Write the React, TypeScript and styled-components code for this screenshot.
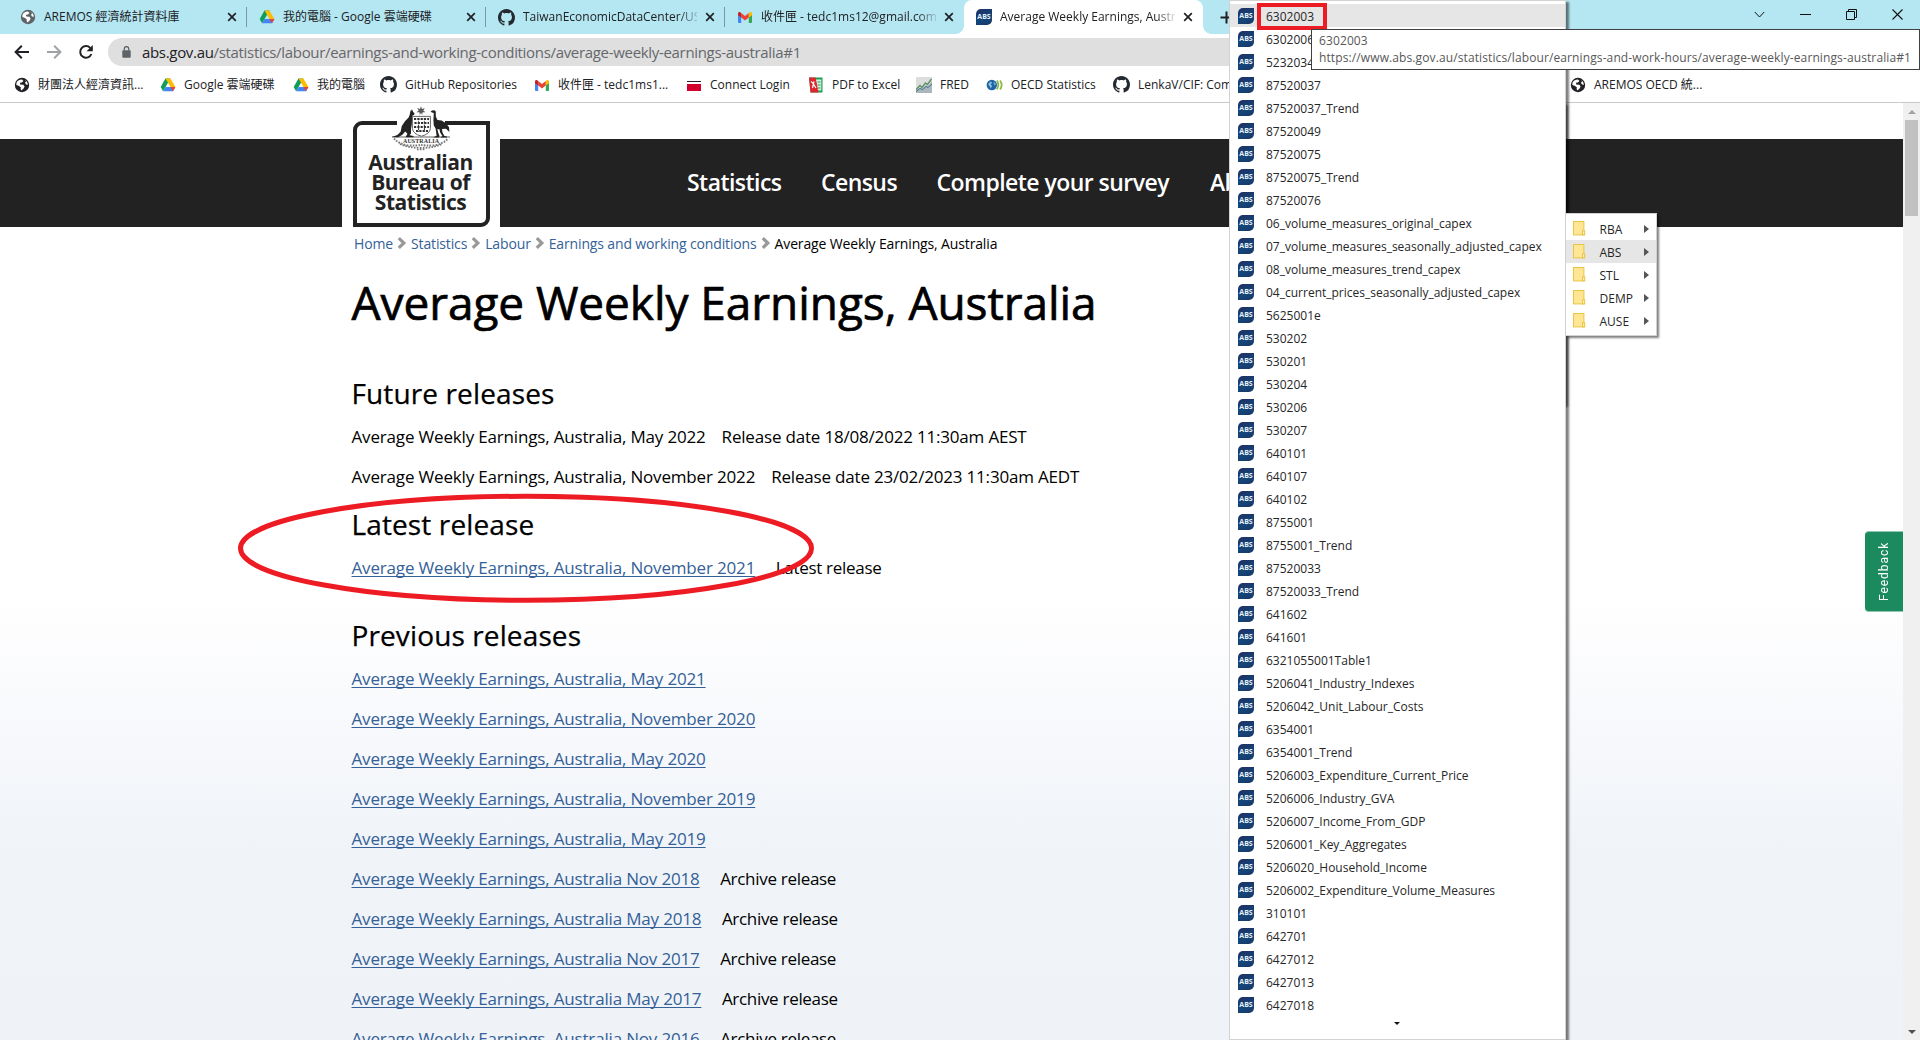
import React from "react";
import styled, { createGlobalStyle, css } from "styled-components";

const uiFont = `"Open Sans", "Noto Sans CJK TC", sans-serif`;
const RED = "#ed1c24";

const GlobalStyle = createGlobalStyle`
  *, *::before, *::after { box-sizing: border-box; }
  body { margin: 0; background: #fff; font-family: ${uiFont}; color: #000; overflow: hidden; }
  svg { display: block; flex: none; }
`;

const Screen = styled.div`
  position: relative;
  width: 1920px;
  height: 1040px;
  overflow: hidden;
  display: flex;
  flex-direction: column;
`;

/* ---------- browser chrome ---------- */

const TabStrip = styled.div`
  height: 34px;
  flex: none;
  display: flex;
  padding-left: 8px;
  background: #b4e7f2;
`;

const TabItem = styled.div<{ $active?: boolean; $divider?: boolean }>`
  position: relative;
  width: 239px;
  height: 34px;
  flex: none;
  display: flex;
  align-items: center;
  gap: 8px;
  padding: 0 10px 0 12px;
  font-size: 12px;
  color: #202124;
  ${(p) =>
    p.$active &&
    css`
      background: #fff;
      border-radius: 8px 8px 0 0;
      &::before,
      &::after {
        content: "";
        position: absolute;
        bottom: 0;
        width: 8px;
        height: 8px;
      }
      &::before {
        left: -8px;
        background: radial-gradient(circle at 0 0, transparent 7.5px, #fff 8px);
      }
      &::after {
        right: -8px;
        background: radial-gradient(circle at 100% 0, transparent 7.5px, #fff 8px);
      }
    `}
  ${(p) =>
    p.$divider &&
    css`
      &::after {
        content: "";
        position: absolute;
        right: 0;
        top: 7px;
        width: 1px;
        height: 20px;
        background: #7d979e;
      }
    `}
`;

const TabTitle = styled.span<{ $fade?: boolean }>`
  flex: 1;
  min-width: 0;
  height: 20px;
  line-height: 20px;
  white-space: nowrap;
  overflow: hidden;
  ${(p) =>
    p.$fade &&
    css`
      mask-image: linear-gradient(90deg, #000 156px, transparent 178px);
    `}
`;

const NewTab = styled.div`
  display: flex;
  align-items: center;
  padding-left: 17px;
`;

const WindowControls = styled.div`
  margin-left: auto;
  height: 28px;
  display: flex;
  align-items: center;
  & > svg {
    margin-right: 35px;
  }
  & > svg:last-child {
    margin-right: 17px;
  }
`;

const Toolbar = styled.div`
  height: 35px;
  flex: none;
  display: flex;
  align-items: center;
  padding: 1px 0 0 14px;
  gap: 16px;
  background: #fff;
`;

const Omnibox = styled.div`
  margin-left: -2px;
  width: 1500px;
  height: 28px;
  display: flex;
  align-items: center;
  gap: 11px;
  padding-left: 14px;
  border-radius: 14px;
  background: #dfdfdf;
  font-size: 15px;
  letter-spacing: -0.32px;
  color: #65686c;
  white-space: nowrap;
`;

const Host = styled.span`
  color: #202124;
`;

const BookmarksBar = styled.div`
  height: 34px;
  flex: none;
  display: flex;
  align-items: center;
  padding: 0 0 2px 14px;
  background: #fff;
  border-bottom: 1px solid #c9c9c9;
`;

const Bookmark = styled.div<{ $w: number }>`
  width: ${(p) => p.$w}px;
  flex: none;
  display: flex;
  align-items: center;
  gap: 8px;
  font-size: 12px;
  line-height: 20px;
  color: #202124;
  white-space: nowrap;
`;

/* ---------- icons ---------- */

const AbsIcon = styled.span`
  width: 16px;
  height: 16px;
  flex: none;
  display: flex;
  align-items: center;
  justify-content: center;
  border-radius: 5px 0 5px 0;
  background: linear-gradient(160deg, #1f2f63, #14477a 60%, #1b3465);
  color: #e8f0f8;
  font: 700 7px/16px "Open Sans", sans-serif;
`;

const GlobeIcon = ({ color = "#202124" }: { color?: string }) => (
  <svg width="16" height="16" viewBox="0 0 16 16">
    <circle cx="8" cy="8" r="7.2" fill={color} />
    <path d="M2.6 5.2C4 3 6.2 2.3 8 2.5L9.5 4 7.8 5.4 6 5.7 6.2 7.4 9.4 7.7 10.6 9.4 9.6 11.4 7.4 13.6 6.6 12 6.8 10.2 4.6 8.8 2.3 8Z" fill="#fff" />
    <path d="M10.6 2.9 12.2 4.3 11 5.8 12 7.4 13.9 7.8C13.7 5.4 12.6 3.7 10.6 2.9Z" fill="#fff" />
  </svg>
);

const DriveIcon = () => (
  <svg width="16" height="16" viewBox="0 0 16 16">
    <path d="M5.5 1.5H10.4L8 5.7 3.1 14.2.7 10Z" fill="#0f9d58" />
    <path d="M5.5 1.5H10.4L15.4 10H10.5Z" fill="#fbbc04" />
    <path d="M5.6 10H15.4L13 14.3H3.1Z" fill="#4285f4" />
    <path d="M15.4 10 13 14.3 10.5 10Z" fill="#ea4335" />
  </svg>
);

const GithubIcon = () => (
  <svg width="17" height="17" viewBox="0 0 16 16">
    <path fill="#24292f" d="M8 0C3.58 0 0 3.58 0 8c0 3.54 2.29 6.53 5.47 7.59.4.07.55-.17.55-.38 0-.19-.01-.82-.01-1.49-2.01.37-2.53-.49-2.69-.94-.09-.23-.48-.94-.82-1.13-.28-.15-.68-.52-.01-.53.63-.01 1.08.58 1.23.82.72 1.21 1.87.87 2.33.66.07-.52.28-.87.51-1.07-1.78-.2-3.64-.89-3.64-3.95 0-.87.31-1.59.82-2.15-.08-.2-.36-1.02.08-2.12 0 0 .67-.21 2.2.82.64-.18 1.32-.27 2-.27s1.36.09 2 .27c1.53-1.04 2.2-.82 2.2-.82.44 1.1.16 1.92.08 2.12.51.56.82 1.27.82 2.15 0 3.07-1.87 3.75-3.65 3.95.29.25.54.73.54 1.48 0 1.07-.01 1.93-.01 2.2 0 .21.15.46.55.38A8.01 8.01 0 0 0 16 8c0-4.42-3.58-8-8-8z" />
  </svg>
);

const GmailIcon = () => (
  <svg width="16" height="16" viewBox="0 0 16 16">
    <path d="M1 4.5V13a.9.9 0 0 0 .9.9H4.2V6.6Z" fill="#4285f4" />
    <path d="M15 4.5V13a.9.9 0 0 1-.9.9H11.8V6.6Z" fill="#34a853" />
    <path d="M4.2 8.6V4.1L8 7 11.8 4.1V8.6L8 11.5Z" fill="#ea4335" />
    <path d="M1 4.4V6.2L4.2 8.6V4.1L3.1 3.2C2.2 2.5 1 3.2 1 4.4Z" fill="#c5221f" />
    <path d="M15 4.4V6.2L11.8 8.6V4.1L12.9 3.2C13.8 2.5 15 3.2 15 4.4Z" fill="#fbbc04" />
  </svg>
);

const ConnectIcon = () => (
  <svg width="16" height="16" viewBox="0 0 16 16">
    <path d="M1 4H15V5H1Z" fill="#222" />
    <path d="M1 7H15V14H1Z" fill="#d4002c" />
  </svg>
);

const PdfIcon = () => (
  <svg width="16" height="16" viewBox="0 0 16 16">
    <path d="M1 .5H14.5V15.5H2.5Z" fill="#1e9b57" />
    <path d="M8 2.5H13.3V13.5H9Z" fill="#d9f1e2" />
    <path d="M9.5 5H12.5M9.5 8H12.5M9.5 11H12.5" stroke="#1e9b57" />
    <path d="M1 .5H7.5L10.5 15.5H2.5Z" fill="#e0262d" />
    <path d="M3 4.5C5.5 6 6 8.5 8 11M6 4.5 4.5 11" stroke="#fff" fill="none" strokeWidth="1.2" />
  </svg>
);

const FredIcon = () => (
  <svg width="16" height="16" viewBox="0 0 16 16">
    <rect width="16" height="16" fill="#dcdedd" />
    <path d="M0 13 4 10.5 6 11.5 10 8 12 9 16 4V16H0Z" fill="#a9b7bd" />
    <path d="M0 12.5 4 8.5 6 10.5 9.5 6 11.5 7.5 15.5 2" stroke="#5f8f63" strokeWidth="1.4" fill="none" />
    <path d="M0 14.5 4 11.5 6.5 12.5 10 9.5 12 10.5 16 7" stroke="#47718f" fill="none" />
  </svg>
);

const OecdIcon = () => (
  <svg width="17" height="16" viewBox="0 0 17 16">
    <circle cx="5.8" cy="8" r="5.2" fill="#1c64a5" />
    <path d="M2.8 6 5 4.6 6 5.8 4.8 7.2 6 9 4.8 11.4 3.8 9.4 2.4 8Z" fill="#8fc0e0" />
    <path d="M7.6 5 9.4 5.6 9.8 8 8 8.6Z" fill="#6fa9d3" />
    <path d="M10.8 3.5Q13.8 8 10.8 12.5M14 3.5Q17.3 8 14 12.5" stroke="#8db94a" strokeWidth="1.8" fill="none" />
  </svg>
);

const CloseIcon = () => (
  <svg width="10" height="10" viewBox="0 0 10 10">
    <path d="M1.2 1.2 8.8 8.8M8.8 1.2 1.2 8.8" stroke="#202124" strokeWidth="1.7" />
  </svg>
);

const LockIcon = () => (
  <svg width="9" height="12" viewBox="0 0 9 12">
    <rect x=".3" y="4.2" width="8.4" height="7.6" rx="1" fill="#5f6368" />
    <path d="M2.3 4.5V2.8a2.2 2.2 0 0 1 4.4 0V4.5" stroke="#5f6368" strokeWidth="1.3" fill="none" />
  </svg>
);

const ArrowIcon = ({ flip, color }: { flip?: boolean; color: string }) => (
  <svg width="16" height="16" viewBox="0 0 16 16">
    <path d={flip ? "M1 8H14M8.2 1.8 14.4 8 8.2 14.2" : "M15 8H2M7.8 1.8 1.6 8 7.8 14.2"} stroke={color} strokeWidth="2" fill="none" />
  </svg>
);

const ReloadIcon = () => (
  <svg width="16" height="16" viewBox="0 0 16 16">
    <path d="M13.4 10A5.8 5.8 0 1 1 12.2 3.9L13.8 5.6" stroke="#202124" strokeWidth="2" fill="none" />
    <path d="M14.8 1V7.2H8.6Z" fill="#202124" />
  </svg>
);

const FolderIcon = () => (
  <svg width="13" height="15" viewBox="0 0 13 15">
    <rect x=".5" y=".5" width="10.4" height="13.4" fill="#ffe694" stroke="#e8c545" />
    <rect x="9.5" y="9.8" width="2.2" height="4.1" fill="#fff0b5" stroke="#e8c545" />
  </svg>
);

const CoatOfArms = () => (
  <svg width="60" height="46" viewBox="0 0 60 46">
    <rect x="6" y="10" width="48" height="14" fill="#fff" />
    <g fill="#232323">
      <path d="M30 .3 31 3 33.8 2 32.3 4.6 34.5 6.3 31.6 6.3 31.2 9 30 6.8 28.8 9 28.4 6.3 25.5 6.3 27.7 4.6 26.2 2 29 3Z" opacity=".75" />
      <path d="M20.2 3.2 21 5.2 21.6 3.4 22 5.8 23.6 7.6 23 9 21.4 9.4 21.4 12.4 24.3 14.6 23.8 15.6 21 14.8 20.8 18.6 20 22.6 20 27.5 18.6 29.2 22.6 30 22.4 31.2 14.6 31.2 16.4 27.8 14.2 25.4 11.4 28.8 7.2 31.2.8 31 6.4 29 9.6 25.8 10.8 20 14 15.2 17.6 11.6 18.8 8.4 19.2 6Z" />
      <path d="M41 4.4 43.4 4.2 44.8 5.4 44.8 10.4 46.4 14 50.6 14.4 55 17.2 58 21.2 58.4 26 55 22.8 51 23 51.4 26.2 53.4 30 56 30.6 56 31.4 49.4 31.4 51.4 30 49 26.2 48.6 23.6 46.4 23 47 26 48.4 29.8 48.2 31.4 42 31.4 45.6 29.8 44.6 22.4 42.8 19.6 42.4 14.4 42.8 7 41 6.6 39.6 5.8Z" />
      <path d="M1 30.6H59V31.6H1Z" opacity=".7" />
    </g>
    <path d="M21.4 10.4H39.4V22.6Q38.8 28 30.5 30.2 22 28 21.4 22.6Z" fill="#fff" stroke="#555" strokeWidth=".9" />
    <g stroke="#333" strokeWidth="1.9" strokeDasharray="2.2 1.1" fill="none">
      <path d="M23 13H38M23.4 17H38" />
      <path d="M23 21H38M25 25H37" />
      <path d="M27.6 12V26M33.4 12V26" strokeWidth="1" />
    </g>
    <text x="30" y="37" textAnchor="middle" textLength="36" fontFamily="Liberation Serif, serif" fontSize="6" fontWeight="700" fill="#333">
      AUSTRALIA
    </text>
    <g stroke="#777" fill="none" strokeDasharray="1.6 1.3">
      <path d="M3 32.6Q8 38 17 39.4 26 40 30 38.8 34 40 43 39.4 52 38 57 32.6" strokeWidth="2" />
      <path d="M9 38Q18 42 30 42 42 42 51 38" strokeWidth="1.8" />
      <path d="M26 43.6H34" strokeWidth="1.2" />
    </g>
  </svg>
);

/* ---------- page ---------- */

const PageArea = styled.div`
  flex: 1;
  min-height: 0;
  display: flex;
`;

const Page = styled.main`
  width: 1903px;
  flex: none;
  overflow: hidden;
  background: linear-gradient(180deg, #fff 0, #fff 490px, #f8f9fc 620px, #f0f4f8 740px, #eff3f7 100%);
`;

const SiteHeader = styled.header`
  margin-top: 36px;
  height: 88px;
  display: flex;
  align-items: center;
  background: #222;
`;

const LogoArea = styled.div`
  margin-left: 342px;
  width: 158px;
  height: 88px;
  flex: none;
  display: flex;
  justify-content: center;
  align-items: flex-end;
  background: #fff;
`;

const LogoFrame = styled.div`
  width: 137px;
  height: 106px;
  flex: none;
  margin-left: 1px;
  padding-right: 2px;
  display: flex;
  flex-direction: column;
  align-items: center;
  border: 4px solid #232323;
  border-radius: 9px 0 9px 0;
  background: #fff;
  & > svg {
    margin-top: -19px;
  }
`;

const LogoText = styled.div`
  margin-top: -0.5px;
  font-size: 21px;
  font-weight: 700;
  line-height: 20px;
  letter-spacing: -0.47px;
  color: #232323;
  text-align: center;
`;

const Nav = styled.nav`
  margin: -2px 0 0 187px;
  display: flex;
  gap: 39.5px;
  font-size: 23px;
  font-weight: 600;
  letter-spacing: -0.55px;
  line-height: 30px;
  color: #fff;
  white-space: nowrap;
  & > span:last-child {
    margin-left: 1.5px;
  }
`;

const Content = styled.div`
  padding-left: 351.5px;
`;

const Breadcrumbs = styled.div`
  height: 34px;
  padding: 0 0 2px 2.5px;
  display: flex;
  align-items: center;
  gap: 4px;
  font-size: 14px;
  letter-spacing: -0.14px;
  color: #000;
`;

const Crumb = styled.a`
  color: #336198;
`;

const Title = styled.h1`
  margin: 11px 0 0;
  font-size: 46px;
  font-weight: 500;
  line-height: 60px;
  letter-spacing: -0.07px;
  -webkit-text-stroke: 0.7px #000;
`;

const SectionTitle = styled.h2<{ $top: number }>`
  margin: ${(p) => p.$top}px 0 0;
  font-size: 28px;
  font-weight: 400;
  line-height: 44px;
  letter-spacing: 0.12px;
  -webkit-text-stroke: 0.25px #000;
`;

const ReleaseList = styled.div<{ $top: number }>`
  margin-top: ${(p) => p.$top}px;
`;

const ReleaseRow = styled.div<{ $gap?: number }>`
  height: 40px;
  display: flex;
  align-items: center;
  gap: ${(p) => p.$gap ?? 20.5}px;
  font-size: 17px;
  letter-spacing: -0.17px;
  white-space: nowrap;
`;

const Note = styled.span<{ $tight?: boolean }>`
  letter-spacing: ${(p) => (p.$tight ? -0.3 : -0.19)}px;
`;

const ReleaseLink = styled.a`
  color: #336198;
  text-decoration: underline;
  text-decoration-thickness: 1px;
  text-underline-offset: 2px;
  text-decoration-skip-ink: none;
`;

const Scrollbar = styled.div`
  width: 17px;
  flex: none;
  display: flex;
  flex-direction: column;
  align-items: center;
  padding: 7px 0 6px;
  background: #f0f0f0;
`;

const Thumb = styled.div`
  margin: 6px 0 auto;
  width: 13px;
  height: 96px;
  background: #c1c1c1;
`;

const Triangle = styled.span<{ $dir: "up" | "down" | "right"; $c: string; $small?: boolean }>`
  width: 0;
  height: 0;
  flex: none;
  border: 0 solid transparent;
  ${(p) => p.$dir === "up" && `border-width: 0 4px 4px; border-bottom-color: ${p.$c};`}
  ${(p) => p.$dir === "down" && `border-width: ${p.$small ? "3px 3px 0" : "4px 4px 0"}; border-top-color: ${p.$c};`}
  ${(p) => p.$dir === "right" && `border-width: 4px 0 4px 5px; border-left-color: ${p.$c};`}
`;

/* ---------- floating layers ---------- */

const Feedback = styled.div`
  position: absolute;
  left: 1865px;
  top: 531px;
  width: 38px;
  height: 81px;
  display: flex;
  align-items: center;
  justify-content: center;
  border: solid #8fc7b0;
  border-width: 1px 0;
  border-radius: 0 4px 4px 0;
  background: #1b8a5e;
  color: #fff;
  font: 400 12px/16px Roboto, sans-serif;
  letter-spacing: 0.95px;
  writing-mode: vertical-rl;
  transform: rotate(180deg);
`;

const Highlight = styled.svg`
  position: absolute;
  left: 236px;
  top: 492px;
`;

const MenuShadow = styled.div`
  position: absolute;
  left: 1400px;
  top: 103px;
  width: 166px;
  height: 302px;
  box-shadow: 2px 2px 2px rgba(0, 0, 0, 0.5);
`;

const Menu = styled.div`
  position: absolute;
  left: 1229px;
  top: 0;
  width: 337px;
  height: 1040px;
  display: flex;
  flex-direction: column;
  padding-top: 3px;
  border: 1px solid #d2d2d2;
  background: #fff;
  box-shadow: 3px 2px 2px rgba(0, 0, 0, 0.5);
`;

const MenuRow = styled.div<{ $on?: boolean }>`
  height: 23px;
  flex: none;
  display: flex;
  align-items: center;
  gap: 12px;
  padding: 0 0 0 8px;
  background: ${(p) => (p.$on ? "#e6e6e6" : "transparent")};
  font-size: 12px;
  line-height: 20px;
  color: #262626;
  & > span:last-child {
    padding-top: 2px;
  }
`;

const MenuMore = styled.div`
  display: flex;
  justify-content: center;
  padding: 6px 2px 0 0;
`;

const FolderMenu = styled.div`
  position: absolute;
  left: 1566px;
  top: 213px;
  width: 91px;
  height: 123px;
  padding: 3px 0;
  border: 1px solid #d2d2d2;
  border-left: 0;
  background: #fff;
  box-shadow: 2px 2px 2px rgba(0, 0, 0, 0.5);
`;

const FolderRow = styled.div<{ $on?: boolean }>`
  height: 23px;
  display: flex;
  align-items: center;
  padding: 0 7px 0 7px;
  background: ${(p) => (p.$on ? "#e6e6e6" : "transparent")};
  font-size: 12px;
  color: #262626;
`;

const FolderName = styled.span`
  flex: 1;
  margin-left: 13.5px;
  padding-top: 1px;
`;

const Tooltip = styled.div`
  position: absolute;
  left: 1311px;
  top: 29px;
  width: 609px;
  height: 41px;
  padding: 3px 0 0 7px;
  border: 1px solid #404040;
  background: #fff;
  font-size: 12px;
  line-height: 16.5px;
  letter-spacing: 0.11px;
  color: #575757;
  white-space: nowrap;
`;

const RedBox = styled.div`
  position: absolute;
  left: 1257px;
  top: 3px;
  width: 70px;
  height: 27px;
  border: 4px solid ${RED};
`;

const menuItems = [
  "6302003", "6302006", "5232034", "87520037", "87520037_Trend", "87520049", "87520075", "87520075_Trend", "87520076",
  "06_volume_measures_original_capex", "07_volume_measures_seasonally_adjusted_capex", "08_volume_measures_trend_capex",
  "04_current_prices_seasonally_adjusted_capex", "5625001e", "530202", "530201", "530204", "530206", "530207", "640101",
  "640107", "640102", "8755001", "8755001_Trend", "87520033", "87520033_Trend", "641602", "641601", "6321055001Table1",
  "5206041_Industry_Indexes", "5206042_Unit_Labour_Costs", "6354001", "6354001_Trend", "5206003_Expenditure_Current_Price",
  "5206006_Industry_GVA", "5206007_Income_From_GDP", "5206001_Key_Aggregates", "5206020_Household_Income",
  "5206002_Expenditure_Volume_Measures", "310101", "642701", "6427012", "6427013", "6427018",
];

const folders = ["RBA", "ABS", "STL", "DEMP", "AUSE"];

const previous: [string, boolean][] = [
  [", May 2021", false],
  [", November 2020", false],
  [", May 2020", false],
  [", November 2019", false],
  [", May 2019", false],
  [" Nov 2018", true],
  [" May 2018", true],
  [" Nov 2017", true],
  [" May 2017", true],
  [" Nov 2016", true],
];

const bookmarks: [React.ReactNode, string, number][] = [
  [<GlobeIcon />, "財團法人經濟資訊...", 146],
  [<DriveIcon />, "Google 雲端硬碟", 133],
  [<DriveIcon />, "我的電腦", 87],
  [<GithubIcon />, "GitHub Repositories", 154],
  [<GmailIcon />, "收件匣 - tedc1ms1...", 152],
  [<ConnectIcon />, "Connect Login", 122],
  [<PdfIcon />, "PDF to Excel", 108],
  [<FredIcon />, "FRED", 70],
  [<OecdIcon />, "OECD Statistics", 127],
  [<GithubIcon />, "LenkaV/CIF: Com", 457],
  [<GlobeIcon />, "AREMOS OECD 統...", 150],
];

const Chevron = () => (
  <svg width="10" height="12" viewBox="0 0 10 12">
    <path d="M1.8 1.2 6.8 6 1.8 10.8" stroke="#999" strokeWidth="3.2" fill="none" />
  </svg>
);

export default function App() {
  return (
    <Screen>
      <GlobalStyle />
      <TabStrip>
        <TabItem $divider>
          <GlobeIcon color="#5f6368" />
          <TabTitle>AREMOS 經濟統計資料庫</TabTitle>
          <CloseIcon />
        </TabItem>
        <TabItem $divider>
          <DriveIcon />
          <TabTitle>我的電腦 - Google 雲端硬碟</TabTitle>
          <CloseIcon />
        </TabItem>
        <TabItem $divider>
          <GithubIcon />
          <TabTitle $fade>TaiwanEconomicDataCenter/US</TabTitle>
          <CloseIcon />
        </TabItem>
        <TabItem>
          <GmailIcon />
          <TabTitle $fade>收件匣 - tedc1ms12@gmail.com</TabTitle>
          <CloseIcon />
        </TabItem>
        <TabItem $active>
          <AbsIcon>ABS</AbsIcon>
          <TabTitle $fade>Average Weekly Earnings, Australia</TabTitle>
          <CloseIcon />
        </TabItem>
        <NewTab>
          <svg width="13" height="13" viewBox="0 0 13 13">
            <path d="M6.5 .5V12.5M.5 6.5H12.5" stroke="#202124" strokeWidth="2" />
          </svg>
        </NewTab>
        <WindowControls>
          <svg width="11" height="11" viewBox="0 0 11 11"><path d="M.8 3 5.5 8 10.2 3" stroke="#111" fill="none" /></svg>
          <svg width="11" height="11" viewBox="0 0 11 11"><path d="M0 5.5H11" stroke="#111" /></svg>
          <svg width="11" height="11" viewBox="0 0 11 11"><path d="M.5 2.5H8.5V10.5H.5ZM2.5 2.5V.5H10.5V8.5H8.5" stroke="#111" fill="none" /></svg>
          <svg width="11" height="11" viewBox="0 0 11 11"><path d="M.5 .5 10.5 10.5M10.5 .5 .5 10.5" stroke="#111" strokeWidth="1.1" /></svg>
        </WindowControls>
      </TabStrip>
      <Toolbar>
        <ArrowIcon color="#202124" />
        <ArrowIcon flip color="#a0a3a6" />
        <ReloadIcon />
        <Omnibox>
          <LockIcon />
          <span>
            <Host>abs.gov.au</Host>/statistics/labour/earnings-and-working-conditions/average-weekly-earnings-australia#1
          </span>
        </Omnibox>
      </Toolbar>
      <BookmarksBar>
        {bookmarks.map(([icon, label, w], i) => (
          <Bookmark key={i} $w={w}>
            {icon}
            <span>{label}</span>
          </Bookmark>
        ))}
      </BookmarksBar>

      <PageArea>
        <Page>
          <SiteHeader>
            <LogoArea>
              <LogoFrame>
                <CoatOfArms />
                <LogoText>
                  Australian
                  <br />
                  Bureau of
                  <br />
                  Statistics
                </LogoText>
              </LogoFrame>
            </LogoArea>
            <Nav>
              <span>Statistics</span>
              <span>Census</span>
              <span>Complete your survey</span>
              <span>About</span>
            </Nav>
          </SiteHeader>
          <Content>
            <Breadcrumbs>
              <Crumb>Home</Crumb>
              <Chevron />
              <Crumb>Statistics</Crumb>
              <Chevron />
              <Crumb>Labour</Crumb>
              <Chevron />
              <Crumb>Earnings and working conditions</Crumb>
              <Chevron />
              <span>Average Weekly Earnings, Australia</span>
            </Breadcrumbs>
            <Title>Average Weekly Earnings, Australia</Title>
            <SectionTitle $top={39}>Future releases</SectionTitle>
            <ReleaseList $top={1}>
              <ReleaseRow $gap={16}>
                <span>Average Weekly Earnings, Australia, May 2022</span>
                <Note>Release date 18/08/2022 11:30am AEST</Note>
              </ReleaseRow>
              <ReleaseRow $gap={16}>
                <span>Average Weekly Earnings, Australia, November 2022</span>
                <Note>Release date 23/02/2023 11:30am AEDT</Note>
              </ReleaseRow>
            </ReleaseList>
            <SectionTitle $top={6}>Latest release</SectionTitle>
            <ReleaseList $top={1}>
              <ReleaseRow>
                <ReleaseLink>Average Weekly Earnings, Australia, November 2021</ReleaseLink>
                <Note $tight>Latest release</Note>
              </ReleaseRow>
            </ReleaseList>
            <SectionTitle $top={26}>Previous releases</SectionTitle>
            <ReleaseList $top={1}>
              {previous.map(([suffix, archived]) => (
                <ReleaseRow key={suffix}>
                  <ReleaseLink>Average Weekly Earnings, Australia{suffix}</ReleaseLink>
                  {archived && <Note $tight>Archive release</Note>}
                </ReleaseRow>
              ))}
            </ReleaseList>
          </Content>
        </Page>
        <Scrollbar>
          <Triangle $dir="up" $c="#a3a3a3" />
          <Thumb />
          <Triangle $dir="down" $c="#505050" />
        </Scrollbar>
      </PageArea>

      <Feedback>Feedback</Feedback>
      <Highlight width="580" height="113" viewBox="0 0 580 113">
        <ellipse cx="290" cy="56.3" rx="285.5" ry="52" fill="none" stroke={RED} strokeWidth="5" />
      </Highlight>

      <MenuShadow />
      <Menu>
        {menuItems.map((name, i) => (
          <MenuRow key={name} $on={i === 0}>
            <AbsIcon>ABS</AbsIcon>
            <span>{name}</span>
          </MenuRow>
        ))}
        <MenuMore>
          <Triangle $dir="down" $small $c="#111" />
        </MenuMore>
      </Menu>
      <FolderMenu>
        {folders.map((name) => (
          <FolderRow key={name} $on={name === "ABS"}>
            <FolderIcon />
            <FolderName>{name}</FolderName>
            <Triangle $dir="right" $c="#555" />
          </FolderRow>
        ))}
      </FolderMenu>
      <RedBox />
      <Tooltip>
        6302003
        <br />
        https://www.abs.gov.au/statistics/labour/earnings-and-work-hours/average-weekly-earnings-australia#1
      </Tooltip>
    </Screen>
  );
}
